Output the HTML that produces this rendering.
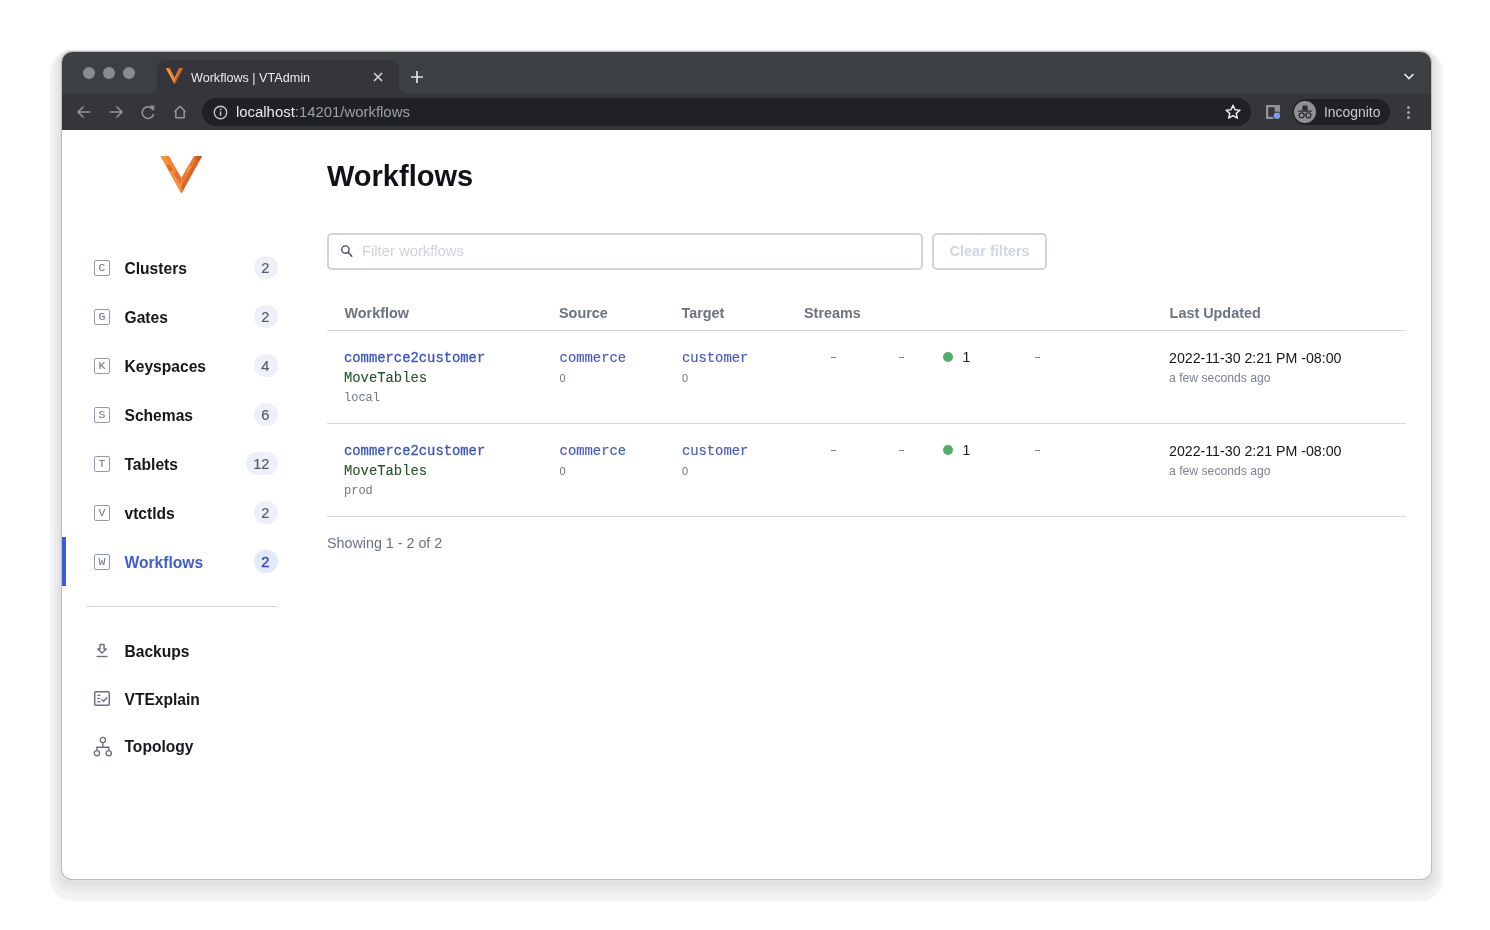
<!DOCTYPE html>
<html><head><meta charset="utf-8">
<style>
*{box-sizing:border-box;margin:0;padding:0}
html,body{width:1490px;height:930px;overflow:hidden;background:#fff;font-family:"Liberation Sans",sans-serif}
.abs{position:absolute}
#win{position:absolute;left:62px;top:52px;width:1369px;height:827px;border-radius:10px;background:#fff;overflow:hidden;box-shadow:0 0 0 1px rgba(0,0,0,0.17),0 3px 2px 4px #e2e2e2,0 6px 2px 8px #eaeaea,0 10px 2px 12px #f3f3f3}
#tabbar{position:absolute;left:0;top:0;width:1369px;height:42px;background:#3c4043}
#toolbar{position:absolute;left:0;top:42px;width:1369px;height:36px;background:#35363a}
.dot{position:absolute;top:15px;width:12px;height:12px;border-radius:50%;background:#8a8b8d}
#tab{position:absolute;left:95px;top:8px;width:242px;height:34px;background:#35363a;border-radius:8px 8px 0 0}
#tab:before,#tab:after{content:'';position:absolute;bottom:0;width:8px;height:8px}
#tab:before{left:-8px;background:radial-gradient(circle at 0 0,transparent 7.5px,#35363a 8.2px)}
#tab:after{right:-8px;background:radial-gradient(circle at 100% 0,transparent 7.5px,#35363a 8.2px)}
#tab .title{will-change:transform;position:absolute;left:34px;top:10.5px;font-size:12.6px;color:#e8eaed;white-space:nowrap}
#addr{position:absolute;left:140px;top:4px;width:1049px;height:28px;border-radius:14px;background:#202124}
#addr .url{will-change:transform;position:absolute;left:34px;top:6px;font-size:14.9px;color:#9aa0a6;white-space:nowrap}
#addr .url b{font-weight:normal;color:#e8eaed}
#incog{position:absolute;left:1231px;top:5px;width:97px;height:26px;border-radius:13px;background:#202124}
#incog .txt{will-change:transform;position:absolute;left:31px;top:5px;font-size:13.9px;color:#c8cacd}
.nav{position:absolute;left:32px;height:20px;font-size:15.6px;font-weight:bold;color:#17171b;white-space:nowrap}
.nav .ic{position:absolute;left:0;top:2px;width:16px;height:16px;border:1.5px solid #868c99;border-radius:1.5px;font-family:"Liberation Mono",monospace;font-size:9px;font-weight:normal;color:#6b7080;text-align:center;line-height:13px}
.nav .lbl{position:absolute;left:62px;top:0px}
.badge{position:absolute;top:256px;height:23px;min-width:24px;border-radius:12px;background:#e9edf6;color:#565d6d;font-size:14px;text-align:center;line-height:23px;padding:0 5px}
.hdr{position:absolute;top:304px;font-size:14.4px;font-weight:bold;color:#6c7381;white-space:nowrap}
.m2{-webkit-text-stroke:0.3px currentColor}
.mono{font-family:"Liberation Mono",monospace}
.line{position:absolute;left:265px;width:1079px;height:1px;background:#d7dae0}
</style></head><body>
<div id="win">
  <div id="tabbar">
    <div class="dot" style="left:21px"></div>
    <div class="dot" style="left:41px"></div>
    <div class="dot" style="left:61px"></div>
    <div id="tab">
      <svg class="abs" style="left:9px;top:8px" width="17" height="16" viewBox="0 0 17 16"><polygon points="0,0.3 4,0.3 8.5,9.5 13,0.3 17,0.3 8.5,16" fill="#ec7a30"/><polygon points="0,0.3 2.2,0.3 8.5,13 8.5,16" fill="#f59a45"/><polygon points="15,0.3 17,0.3 8.5,16 8.5,13" fill="#d35a28"/></svg>
      <div class="title">Workflows | VTAdmin</div>
      <svg class="abs" style="left:216px;top:12px" width="10" height="10" viewBox="0 0 10 10"><path d="M1 1l8 8M9 1L1 9" stroke="#d6d8db" stroke-width="1.5"/></svg>
    </div>
    <svg class="abs" style="left:348px;top:18px" width="14" height="14" viewBox="0 0 14 14"><path d="M7 1v12M1 7h12" stroke="#e0e2e5" stroke-width="1.7"/></svg><svg class="abs" style="left:1341px;top:20px" width="12" height="9" viewBox="0 0 12 9"><path d="M1.5 2L6 6.5 10.5 2" fill="none" stroke="#e8eaed" stroke-width="1.6"/></svg>
  </div>
  <div id="toolbar">
    <svg class="abs" style="left:13px;top:9px" width="18" height="18" viewBox="0 0 18 18"><path d="M15.5 9H3M8.5 3.5L3 9l5.5 5.5" fill="none" stroke="#8f9296" stroke-width="1.6"/></svg>
    <svg class="abs" style="left:45px;top:9px" width="18" height="18" viewBox="0 0 18 18"><path d="M2.5 9H15M9.5 3.5L15 9l-5.5 5.5" fill="none" stroke="#8f9296" stroke-width="1.6"/></svg>
    <svg class="abs" style="left:77px;top:9px" width="18" height="18" viewBox="0 0 18 18"><path d="M14.2 7.2A5.8 5.8 0 1 0 14.6 11" fill="none" stroke="#8f9296" stroke-width="1.6"/><path d="M10.3 2.6h5v5z" fill="#8f9296"/></svg>
    <svg class="abs" style="left:109px;top:9px" width="18" height="18" viewBox="0 0 18 18"><path d="M3.6 8.6L9 3.3l5.4 5.3M4.8 7.6v7.2h8.4V7.6" fill="none" stroke="#8f9296" stroke-width="1.6" stroke-linejoin="round"/></svg>

    <div id="addr">
      <svg class="abs" style="left:11px;top:7px" width="15" height="15" viewBox="0 0 15 15"><circle cx="7.5" cy="7.5" r="6.2" fill="none" stroke="#c4c6c9" stroke-width="1.4"/><rect x="6.8" y="6.4" width="1.5" height="4.4" fill="#c4c6c9"/><circle cx="7.55" cy="4.4" r="0.9" fill="#c4c6c9"/></svg>
      <svg class="abs" style="left:1022px;top:5px" width="18" height="18" viewBox="0 0 18 18"><path d="M9 2.2l2 4.6 4.9.4-3.7 3.2 1.1 4.8L9 12.6l-4.3 2.6 1.1-4.8L2.1 7.2 7 6.8z" fill="none" stroke="#e8eaed" stroke-width="1.5" stroke-linejoin="round"/></svg>

      <div class="url"><b>localhost</b>:14201/workflows</div>
    </div>
    
    <svg class="abs" style="left:1204px;top:11px" width="19" height="19" viewBox="0 0 19 19"><rect x="0" y="0" width="14" height="14" fill="#8f9296"/><rect x="2.3" y="2.3" width="6.4" height="9.4" fill="#35363a"/><circle cx="10.9" cy="10.7" r="4.3" fill="#35363a"/><circle cx="10.9" cy="10.7" r="3.2" fill="#7b9cf4"/></svg>
    <div class="abs" style="left:1345px;top:12px;width:3.2px;height:3.2px;border-radius:50%;background:#9aa0a6"></div>
    <div class="abs" style="left:1345px;top:17px;width:3.2px;height:3.2px;border-radius:50%;background:#9aa0a6"></div>
    <div class="abs" style="left:1345px;top:22px;width:3.2px;height:3.2px;border-radius:50%;background:#9aa0a6"></div>
<div id="incog"><svg class="abs" style="left:1px;top:2px" width="22" height="22" viewBox="0 0 22 22"><circle cx="11" cy="11" r="11" fill="#8f9092"/><path d="M4.3 10.1h13.5" stroke="#2a2b2e" stroke-width="1.3"/><path d="M8 9.5l0.8-5h4.4l0.8 5z" fill="#2a2b2e"/><circle cx="7.6" cy="14.3" r="2.5" fill="none" stroke="#2a2b2e" stroke-width="1.2"/><circle cx="14.4" cy="14.3" r="2.5" fill="none" stroke="#2a2b2e" stroke-width="1.2"/><path d="M10 14.1q1-0.8 2 0" fill="none" stroke="#2a2b2e" stroke-width="1"/></svg><div class="txt">Incognito</div></div>
  </div>
  <!-- page -->
  
  <div id="P" class="abs" style="will-change:transform;left:-62px;top:-52px;width:1490px;height:930px">
    <!-- logo -->
    <svg class="abs" style="left:160px;top:156px" width="42" height="38" viewBox="0 0 42 38">
      <polygon points="0.6,0 9,0 21.4,21.8 21.4,37.5" fill="#ef8633"/>
      <polygon points="0.6,0 5,0 21.4,30.5 21.4,37.5" fill="#f4933a"/>
      <polygon points="6.5,9.5 9.8,8.5 13,14.5 9.5,15.5" fill="#e0692b"/>
      <polygon points="13.5,18 17,15.5 21.4,23 21.4,29" fill="#e5702d"/>
      <polygon points="34,0 42,0 21.4,37.5 21.4,21.8" fill="#ea7a30"/>
      <polygon points="38,0 42,0 21.4,37.5 21.4,31" fill="#d9632a"/>
      <polygon points="36.5,0 42,0 39.5,4.5 35,3" fill="#c9542a"/>
      <polygon points="25,15 29,8.5 31.5,10 27.5,17" fill="#f39038"/>
    </svg>
    <!-- nav -->
    <div class="abs" style="left:94px;top:259.5px;width:16px;height:16px;border:1.5px solid #959ba6;border-radius:2px;font-family:'Liberation Mono',monospace;font-size:11.5px;color:#6b7080;text-align:center;line-height:14px">C</div>
<div class="abs" style="left:124.5px;top:260.9px;font-size:15.6px;line-height:15.6px;font-weight:bold;color:#17171b;white-space:nowrap">Clusters</div>
<div class="abs" style="left:254px;top:256px;width:24px;height:23px;border-radius:12px;background:#edf0f7;font-size:14.6px;line-height:24.5px;text-align:center;color:#555c6c;-webkit-text-stroke:0.2px #555c6c;text-indent:-1.5px">2</div>
<div class="abs" style="left:94px;top:308.5px;width:16px;height:16px;border:1.5px solid #959ba6;border-radius:2px;font-family:'Liberation Mono',monospace;font-size:11.5px;color:#6b7080;text-align:center;line-height:14px">G</div>
<div class="abs" style="left:124.5px;top:309.9px;font-size:15.6px;line-height:15.6px;font-weight:bold;color:#17171b;white-space:nowrap">Gates</div>
<div class="abs" style="left:254px;top:305px;width:24px;height:23px;border-radius:12px;background:#edf0f7;font-size:14.6px;line-height:24.5px;text-align:center;color:#555c6c;-webkit-text-stroke:0.2px #555c6c;text-indent:-1.5px">2</div>
<div class="abs" style="left:94px;top:357.5px;width:16px;height:16px;border:1.5px solid #959ba6;border-radius:2px;font-family:'Liberation Mono',monospace;font-size:11.5px;color:#6b7080;text-align:center;line-height:14px">K</div>
<div class="abs" style="left:124.5px;top:358.9px;font-size:15.6px;line-height:15.6px;font-weight:bold;color:#17171b;white-space:nowrap">Keyspaces</div>
<div class="abs" style="left:254px;top:354px;width:24px;height:23px;border-radius:12px;background:#edf0f7;font-size:14.6px;line-height:24.5px;text-align:center;color:#555c6c;-webkit-text-stroke:0.2px #555c6c;text-indent:-1.5px">4</div>
<div class="abs" style="left:94px;top:406.5px;width:16px;height:16px;border:1.5px solid #959ba6;border-radius:2px;font-family:'Liberation Mono',monospace;font-size:11.5px;color:#6b7080;text-align:center;line-height:14px">S</div>
<div class="abs" style="left:124.5px;top:407.9px;font-size:15.6px;line-height:15.6px;font-weight:bold;color:#17171b;white-space:nowrap">Schemas</div>
<div class="abs" style="left:254px;top:403px;width:24px;height:23px;border-radius:12px;background:#edf0f7;font-size:14.6px;line-height:24.5px;text-align:center;color:#555c6c;-webkit-text-stroke:0.2px #555c6c;text-indent:-1.5px">6</div>
<div class="abs" style="left:94px;top:455.5px;width:16px;height:16px;border:1.5px solid #959ba6;border-radius:2px;font-family:'Liberation Mono',monospace;font-size:11.5px;color:#6b7080;text-align:center;line-height:14px">T</div>
<div class="abs" style="left:124.5px;top:456.9px;font-size:15.6px;line-height:15.6px;font-weight:bold;color:#17171b;white-space:nowrap">Tablets</div>
<div class="abs" style="left:246px;top:452px;width:32px;height:23px;border-radius:12px;background:#edf0f7;font-size:14.6px;line-height:24.5px;text-align:center;color:#555c6c;-webkit-text-stroke:0.2px #555c6c;text-indent:-1.5px">12</div>
<div class="abs" style="left:94px;top:504.5px;width:16px;height:16px;border:1.5px solid #959ba6;border-radius:2px;font-family:'Liberation Mono',monospace;font-size:11.5px;color:#6b7080;text-align:center;line-height:14px">V</div>
<div class="abs" style="left:124.5px;top:505.9px;font-size:15.6px;line-height:15.6px;font-weight:bold;color:#17171b;white-space:nowrap">vtctlds</div>
<div class="abs" style="left:254px;top:501px;width:24px;height:23px;border-radius:12px;background:#edf0f7;font-size:14.6px;line-height:24.5px;text-align:center;color:#555c6c;-webkit-text-stroke:0.2px #555c6c;text-indent:-1.5px">2</div>
<div class="abs" style="left:94px;top:553.5px;width:16px;height:16px;border:1.5px solid #959ba6;border-radius:2px;font-family:'Liberation Mono',monospace;font-size:11.5px;color:#6b7080;text-align:center;line-height:14px">W</div>
<div class="abs" style="left:124.5px;top:554.9px;font-size:15.6px;line-height:15.6px;font-weight:bold;color:#3d5bd9;white-space:nowrap">Workflows</div>
<div class="abs" style="left:254px;top:550px;width:24px;height:23px;border-radius:12px;background:#e3e8fa;font-size:14.6px;line-height:24.5px;text-align:center;color:#2f45b8;-webkit-text-stroke:0.35px #2f45b8;text-indent:-1.5px">2</div>

    <div class="abs" style="left:62px;top:537px;width:4px;height:49px;background:#3d5bd9"></div>
    <div class="abs" style="left:86px;top:606px;width:191px;height:1px;background:#d3d6dc"></div>
    <div class="abs" style="left:124.5px;top:644.3px;font-size:15.6px;line-height:15.6px;font-weight:bold;color:#17171b;white-space:nowrap">Backups</div>
<div class="abs" style="left:124.5px;top:692.3px;font-size:15.6px;line-height:15.6px;font-weight:bold;color:#17171b;white-space:nowrap">VTExplain</div>
<div class="abs" style="left:124.5px;top:739.4px;font-size:15.6px;line-height:15.6px;font-weight:bold;color:#17171b;white-space:nowrap">Topology</div>
<svg class="abs" style="left:94px;top:642px" width="16" height="16" viewBox="0 0 16 16"><path d="M6 2.5h4v4.5h2.3L8 11 3.7 7H6z" fill="none" stroke="#6a7080" stroke-width="1.4" stroke-linejoin="round"/><line x1="2.5" y1="14.5" x2="13.5" y2="14.5" stroke="#6a7080" stroke-width="1.4"/></svg>
<svg class="abs" style="left:93px;top:690px" width="18" height="17" viewBox="0 0 18 17"><rect x="1.7" y="1.7" width="14.6" height="13.6" rx="1.3" fill="none" stroke="#6a7080" stroke-width="1.5"/><line x1="4.3" y1="5.3" x2="7.3" y2="5.3" stroke="#6a7080" stroke-width="1.3"/><line x1="4.3" y1="8.5" x2="7.3" y2="8.5" stroke="#6a7080" stroke-width="1.3"/><line x1="4.3" y1="11.7" x2="7.3" y2="11.7" stroke="#6a7080" stroke-width="1.3"/><path d="M8.6 9.3l2 2 3.6-4" fill="none" stroke="#6a7080" stroke-width="1.4"/></svg>
<svg class="abs" style="left:92px;top:736px" width="20" height="22" viewBox="0 0 20 22"><circle cx="10.9" cy="4" r="2.6" fill="none" stroke="#6a7080" stroke-width="1.4"/><circle cx="4.9" cy="17.2" r="2.6" fill="none" stroke="#6a7080" stroke-width="1.4"/><circle cx="16.8" cy="17.2" r="2.6" fill="none" stroke="#6a7080" stroke-width="1.4"/><path d="M10.9 6.6v4.6M4.9 14.6v-3.4h11.9v3.4" fill="none" stroke="#6a7080" stroke-width="1.4"/></svg>

    <!-- main -->
    <div class="abs" style="left:327px;top:162.2px;font-size:29px;font-weight:bold;line-height:29px;color:#111216;white-space:nowrap">Workflows</div>
    <div class="abs" style="left:327px;top:233px;width:596px;height:37px;border:2px solid #cfd3db;border-radius:5px"></div>
    <svg class="abs" style="left:340px;top:244px" width="14" height="14" viewBox="0 0 14 14"><circle cx="5.4" cy="5.5" r="3.7" fill="none" stroke="#434955" stroke-width="1.35"/><line x1="8.1" y1="8.2" x2="11.8" y2="12.2" stroke="#434955" stroke-width="1.45" stroke-linecap="round"/></svg>
    <div class="abs" style="left:362px;top:244.2px;font-size:14.8px;line-height:14.8px;color:#cfd2d9;white-space:nowrap">Filter workflows</div>
    <div class="abs" style="left:932px;top:233px;width:115px;height:37px;border:2px solid #cfd3db;border-radius:5px"></div>
    <div class="abs" style="left:949.4px;top:244.3px;font-size:14.6px;line-height:14.6px;font-weight:bold;color:#d2d6de;white-space:nowrap">Clear filters</div>
    <div class="abs" style="left:344.5px;top:305.6px;font-size:14.4px;line-height:14.4px;font-weight:bold;color:#6c7381;white-space:nowrap">Workflow</div>
<div class="abs" style="left:559px;top:305.6px;font-size:14.4px;line-height:14.4px;font-weight:bold;color:#6c7381;white-space:nowrap">Source</div>
<div class="abs" style="left:681.5px;top:305.6px;font-size:14.4px;line-height:14.4px;font-weight:bold;color:#6c7381;white-space:nowrap">Target</div>
<div class="abs" style="left:804px;top:305.6px;font-size:14.4px;line-height:14.4px;font-weight:bold;color:#6c7381;white-space:nowrap">Streams</div>
<div class="abs" style="left:1169.6px;top:305.6px;font-size:14.4px;line-height:14.4px;font-weight:bold;color:#6c7381;white-space:nowrap">Last Updated</div>

    <div class="abs" style="left:327px;top:330px;width:1079px;height:1px;background:#d5d8df"></div>
    <div class="abs" style="left:327px;top:423px;width:1079px;height:1px;background:#d5d8df"></div>
    <div class="abs" style="left:327px;top:516px;width:1079px;height:1px;background:#d5d8df"></div>
    <div class="abs" style="font-family:'Liberation Mono',monospace;white-space:nowrap;left:344px;top:351.9px;font-size:13.85px;line-height:13.85px;color:#3a52c4;-webkit-text-stroke:0.3px #3a52c4">commerce2customer</div>
<div class="abs" style="font-family:'Liberation Mono',monospace;white-space:nowrap;left:344px;top:371.8px;font-size:13.85px;line-height:13.85px;color:#235226;-webkit-text-stroke:0.1px #235226">MoveTables</div>
<div class="abs" style="font-family:'Liberation Mono',monospace;white-space:nowrap;left:344px;top:391.6px;font-size:12px;line-height:12px;color:#6f7582">local</div>
<div class="abs" style="font-family:'Liberation Mono',monospace;white-space:nowrap;left:559.6px;top:352.3px;font-size:13.85px;line-height:13.85px;color:#4a5cc0;-webkit-text-stroke:0.2px #4a5cc0">commerce</div>
<div class="abs" style="white-space:nowrap;left:559.6px;top:372.8px;font-size:11px;line-height:11px;color:#6f7582">0</div>
<div class="abs" style="font-family:'Liberation Mono',monospace;white-space:nowrap;left:681.9px;top:352.3px;font-size:13.85px;line-height:13.85px;color:#4a5cc0;-webkit-text-stroke:0.2px #4a5cc0">customer</div>
<div class="abs" style="white-space:nowrap;left:681.9px;top:372.8px;font-size:11px;line-height:11px;color:#6f7582">0</div>
<div class="abs" style="left:831px;top:357px;width:5px;height:1px;background:#7a808c"></div>
<div class="abs" style="left:899px;top:357px;width:5px;height:1px;background:#7a808c"></div>
<div class="abs" style="left:1035px;top:357px;width:5px;height:1px;background:#7a808c"></div>
<div class="abs" style="left:943.4px;top:352.1px;width:10px;height:10px;border-radius:50%;background:#52ad6a"></div>
<div class="abs" style="left:962.5px;top:349.6px;font-size:14px;line-height:14px;color:#17171b">1</div>
<div class="abs" style="left:1169px;top:351.2px;font-size:14.2px;line-height:14.2px;color:#17171b;white-space:nowrap">2022-11-30 2:21 PM -08:00</div>
<div class="abs" style="left:1169px;top:371.8px;font-size:12.2px;line-height:12.2px;color:#7f8491;white-space:nowrap">a few seconds ago</div>
<div class="abs" style="font-family:'Liberation Mono',monospace;white-space:nowrap;left:344px;top:444.9px;font-size:13.85px;line-height:13.85px;color:#3a52c4;-webkit-text-stroke:0.3px #3a52c4">commerce2customer</div>
<div class="abs" style="font-family:'Liberation Mono',monospace;white-space:nowrap;left:344px;top:464.8px;font-size:13.85px;line-height:13.85px;color:#235226;-webkit-text-stroke:0.1px #235226">MoveTables</div>
<div class="abs" style="font-family:'Liberation Mono',monospace;white-space:nowrap;left:344px;top:484.6px;font-size:12px;line-height:12px;color:#6f7582">prod</div>
<div class="abs" style="font-family:'Liberation Mono',monospace;white-space:nowrap;left:559.6px;top:445.3px;font-size:13.85px;line-height:13.85px;color:#4a5cc0;-webkit-text-stroke:0.2px #4a5cc0">commerce</div>
<div class="abs" style="white-space:nowrap;left:559.6px;top:465.8px;font-size:11px;line-height:11px;color:#6f7582">0</div>
<div class="abs" style="font-family:'Liberation Mono',monospace;white-space:nowrap;left:681.9px;top:445.3px;font-size:13.85px;line-height:13.85px;color:#4a5cc0;-webkit-text-stroke:0.2px #4a5cc0">customer</div>
<div class="abs" style="white-space:nowrap;left:681.9px;top:465.8px;font-size:11px;line-height:11px;color:#6f7582">0</div>
<div class="abs" style="left:831px;top:450px;width:5px;height:1px;background:#7a808c"></div>
<div class="abs" style="left:899px;top:450px;width:5px;height:1px;background:#7a808c"></div>
<div class="abs" style="left:1035px;top:450px;width:5px;height:1px;background:#7a808c"></div>
<div class="abs" style="left:943.4px;top:445.1px;width:10px;height:10px;border-radius:50%;background:#52ad6a"></div>
<div class="abs" style="left:962.5px;top:442.6px;font-size:14px;line-height:14px;color:#17171b">1</div>
<div class="abs" style="left:1169px;top:444.2px;font-size:14.2px;line-height:14.2px;color:#17171b;white-space:nowrap">2022-11-30 2:21 PM -08:00</div>
<div class="abs" style="left:1169px;top:464.8px;font-size:12.2px;line-height:12.2px;color:#7f8491;white-space:nowrap">a few seconds ago</div>

    <div class="abs" style="left:327px;top:535.8px;font-size:14.3px;line-height:14.3px;color:#6b717d;white-space:nowrap">Showing 1 - 2 of 2</div>
  </div>

</div>
</body></html>
